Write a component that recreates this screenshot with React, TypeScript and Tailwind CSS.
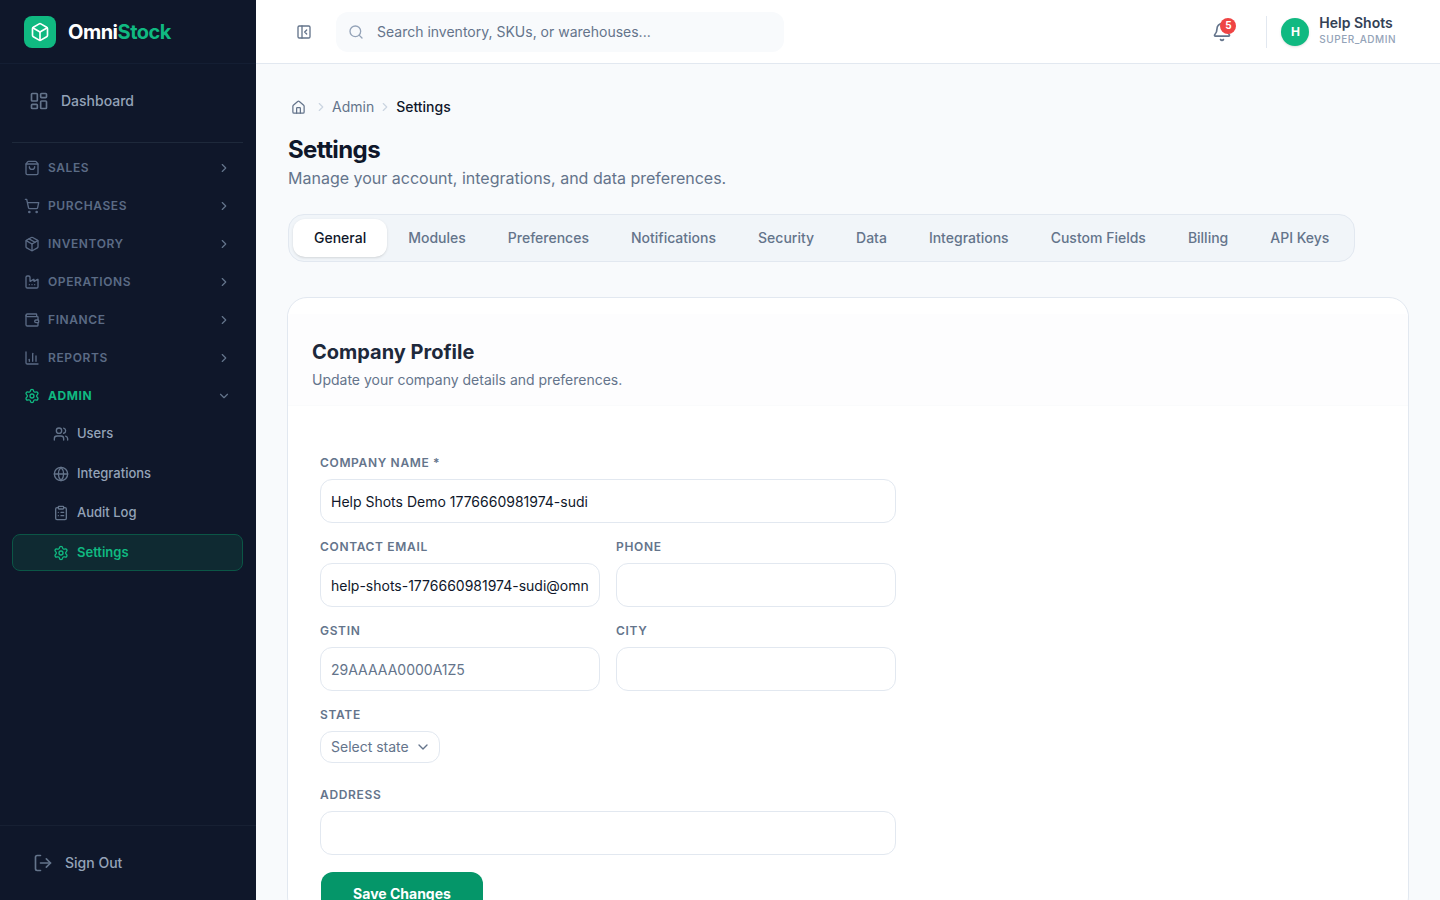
import React from 'react'
import {
  Bell,
  Box,
  ChartColumn,
  ChevronDown,
  ChevronRight,
  ClipboardList,
  Factory,
  Globe,
  Home,
  LayoutDashboard,
  LogOut,
  Package,
  PanelLeftClose,
  Search,
  Settings,
  ShoppingBag,
  ShoppingCart,
  Users,
  Wallet,
} from 'lucide-react'

const groups = [
  { title: 'SALES', icon: ShoppingBag },
  { title: 'PURCHASES', icon: ShoppingCart },
  { title: 'INVENTORY', icon: Package },
  { title: 'OPERATIONS', icon: Factory },
  { title: 'FINANCE', icon: Wallet },
  { title: 'REPORTS', icon: ChartColumn },
]

const adminLinks = [
  { title: 'Users', icon: Users, className: '' },
  { title: 'Integrations', icon: Globe, className: 'mt-[3px]' },
  { title: 'Audit Log', icon: ClipboardList, className: 'mt-[2px]' },
]

const tabs = [
  'General',
  'Modules',
  'Preferences',
  'Notifications',
  'Security',
  'Data',
  'Integrations',
  'Custom Fields',
  'Billing',
  'API Keys',
]

function Sidebar() {
  return (
    <aside className="w-64 h-full shrink-0 flex flex-col bg-[#0f172a]">
      <div className="h-16 shrink-0 flex items-center gap-3 px-6 border-b border-[#141e33]">
        <div className="w-8 h-8 rounded-lg bg-[#10b981] flex items-center justify-center">
          <Box size={20} strokeWidth={2} className="text-white" />
        </div>
        <div className="text-xl font-bold tracking-tight text-white">
          Omni<span className="text-[#10b981]">Stock</span>
        </div>
      </div>

      <div className="flex-1 pl-3 pr-[13px]">
        <div className="h-[79px] pb-1 border-b border-[#1e293b] flex items-center gap-3 pl-[17px]">
          <LayoutDashboard size={20} className="text-[#64748b]" />
          <span className="text-sm font-medium text-[#94a3b8]">Dashboard</span>
        </div>

        <div className="pt-[6px]">
          {groups.map((group) => (
            <div key={group.title} className="h-[38px] flex items-center pl-3 pr-3">
              <group.icon size={16} className="text-[#5b6b85]" />
              <span className="ml-2 flex-1 text-xs font-semibold tracking-[0.05em] text-[#5b6b85]">
                {group.title}
              </span>
              <ChevronRight size={14} className="text-[#64748b]" />
            </div>
          ))}
          <div className="h-[38px] flex items-center pl-3 pr-3">
            <Settings size={16} className="text-[#10b981]" />
            <span className="ml-2 flex-1 text-xs font-bold tracking-[0.05em] text-[#10b981]">
              ADMIN
            </span>
            <ChevronDown size={14} className="text-[#64748b]" />
          </div>
          {adminLinks.map((link) => (
            <div key={link.title} className={`h-[37px] flex items-center gap-2 pl-[41px] ${link.className}`}>
              <link.icon size={16} className="text-[#64748b]" />
              <span className="text-[13px] font-medium text-[#94a3b8]">{link.title}</span>
            </div>
          ))}
          <div className="h-[37px] mt-[3px] flex items-center gap-2 pl-10 rounded-lg border border-[#0b5646] bg-[#0f2a32]">
            <Settings size={16} className="text-[#10b981]" />
            <span className="text-[13px] font-semibold text-[#10b981]">Settings</span>
          </div>
        </div>
      </div>

      <div className="h-[75px] shrink-0 border-t border-[#172033] flex items-center gap-3 pl-[33px]">
        <LogOut size={20} className="text-[#64748b]" />
        <span className="text-sm font-medium text-[#94a3b8]">Sign Out</span>
      </div>
    </aside>
  )
}

function Header() {
  return (
    <header className="h-16 shrink-0 bg-white border-b border-[#e2e8f0] flex items-center pl-10 pr-[44px]">
      <PanelLeftClose size={16} className="text-[#64748b]" />
      <div className="ml-[24px] w-[448px] h-10 rounded-xl bg-[#f8fafc] flex items-center pl-3">
        <Search size={16} className="text-[#94a3b8]" />
        <span className="ml-[13px] text-sm text-[#64748b]">Search inventory, SKUs, or warehouses...</span>
      </div>
      <div className="ml-auto relative mr-[34px]">
        <Bell size={20} className="text-[#64748b]" />
        <span className="absolute -top-1 left-2 w-4 h-4 rounded-full bg-[#ef4444] text-white text-[10px] font-bold flex items-center justify-center">
          5
        </span>
      </div>
      <div className="w-px h-8 bg-[#e2e8f0]" />
      <div className="ml-[14px] w-7 h-7 rounded-full bg-[#10b981] text-white text-xs font-bold flex items-center justify-center shadow-sm">
        H
      </div>
      <div className="ml-[10px] pb-1 flex flex-col">
        <span className="text-sm leading-[18px] font-semibold text-[#334155]">Help Shots</span>
        <span className="text-[10px] leading-[14px] font-medium tracking-[0.05em] text-[#94a3b8]">SUPER_ADMIN</span>
      </div>
    </header>
  )
}

function Field({
  label,
  value = '',
  muted,
  className = '',
}: {
  label: string
  value?: string
  muted?: boolean
  className?: string
}) {
  return (
    <div className={className}>
      <div className="h-[17px] text-xs leading-[17px] font-semibold tracking-[0.055em] text-[#64748b]">{label}</div>
      <input
        readOnly
        value={value}
        className={`block w-full h-11 mt-[8px] px-[10px] rounded-xl border border-[#e2e8f0] bg-white text-sm outline-none ${
          muted ? 'text-[#64748b]' : 'text-[#0f172a]'
        }`}
      />
    </div>
  )
}

function CompanyProfile() {
  return (
    <section className="mt-[35px] -ml-px w-[1122px] rounded-[20px] border border-[#e2e8f0] bg-white pt-4">
      <div className="h-[92px] bg-[#fdfdfe] border-b border-[#fafbfc] px-6 pt-[24px]">
        <h2 className="text-xl leading-[28px] font-bold text-[#1e293b]">Company Profile</h2>
        <p className="mt-[4px] text-sm leading-[20px] text-[#64748b]">Update your company details and preferences.</p>
      </div>
      <div className="px-8 pt-12 w-[640px]">
        <Field label="COMPANY NAME *" value="Help Shots Demo 1776660981974-sudi" />
        <div className="mt-[15px] grid grid-cols-2 gap-x-4 gap-y-[15px]">
          <Field label="CONTACT EMAIL" value="help-shots-1776660981974-sudi@omnistock.example" />
          <Field label="PHONE" />
          <Field label="GSTIN" value="29AAAAA0000A1Z5" muted />
          <Field label="CITY" />
        </div>
        <div className="mt-[15px]">
          <div className="h-[17px] text-xs leading-[17px] font-semibold tracking-[0.055em] text-[#64748b]">STATE</div>
          <div className="mt-[8px] w-[120px] h-8 pl-[10px] pr-2 rounded-xl border border-[#e2e8f0] bg-white flex items-center justify-between text-sm text-[#64748b]">
            Select state
            <ChevronDown size={16} className="text-[#64748b]" />
          </div>
        </div>
        <Field label="ADDRESS" className="mt-[23px]" />
        <button className="mt-[17px] ml-px w-[162px] h-11 rounded-xl bg-[#059669] text-sm font-bold text-white">
          Save Changes
        </button>
      </div>
    </section>
  )
}

export default function App() {
  return (
    <div className="h-screen overflow-hidden flex font-['Inter',sans-serif] bg-[#f8fafc]">
      <Sidebar />
      <div className="flex-1 min-w-0 flex flex-col">
        <Header />
        <main className="flex-1 overflow-hidden pl-8 pt-[33px]">
          <nav className="h-5 flex items-center text-sm">
            <Home size={15} className="ml-[3px] text-[#64748b]" />
            <ChevronRight size={14} className="ml-2 text-[#cbd5e1]" />
            <span className="ml-1 text-[#64748b]">Admin</span>
            <ChevronRight size={14} className="ml-1 text-[#cbd5e1]" />
            <span className="ml-1 font-medium text-[#0f172a]">Settings</span>
          </nav>
          <h1 className="mt-[17px] text-2xl leading-8 font-bold tracking-tight text-[#0f172a]">Settings</h1>
          <p className="leading-6 text-[#64748b]">Manage your account, integrations, and data preferences.</p>
          <div className="mt-6 w-[1067px] h-12 p-1 rounded-2xl border border-[#e2e8f0] bg-[#f1f5f9] flex">
            {tabs.map((tab, i) => (
              <div
                key={tab}
                className={`h-[38px] px-[21px] flex items-center whitespace-nowrap text-sm font-medium rounded-xl ${
                  i === 0 ? 'bg-white text-[#0f172a] shadow-sm' : 'text-[#64748b]'
                }`}
              >
                {tab}
              </div>
            ))}
          </div>
          <CompanyProfile />
        </main>
      </div>
    </div>
  )
}
